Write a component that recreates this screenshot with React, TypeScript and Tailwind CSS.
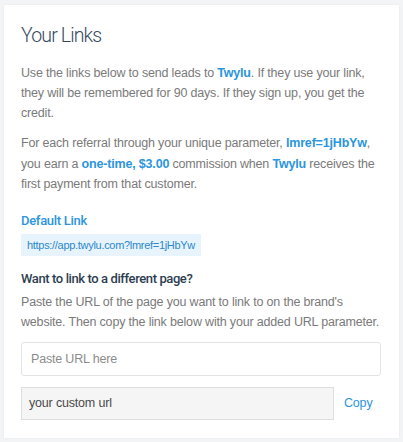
import React from "react";

export default function App() {
  return (
    <div className="w-[403px] h-[442px] bg-[#f3f4f6] pt-[5px] px-[4px] pb-[4px] font-['Liberation_Sans',Arial,sans-serif] tracking-[-0.18px]">
      <div className="bg-white h-[433px] shadow-[0_0_2px_rgba(0,0,0,0.06)] px-[17px] pt-[19px]">
        <h1 className="font-['Roboto',Arial,sans-serif] text-[19.5px] leading-[24px] text-[#34495e] font-light tracking-[-0.85px]">Your Links</h1>
        <p className="mt-[15px] text-[12.5px] leading-[20px] text-[#7a7a7a]">
          Use the links below to send leads to <span className="font-bold text-[#2b95dd]">Twylu</span>. If they use your link, they will be remembered for 90 days. If they sign up, you get the credit.
        </p>
        <p className="mt-[10px] text-[12.5px] leading-[20.5px] text-[#7a7a7a]">
          For each referral through your unique parameter, <span className="font-bold text-[#2b95dd]">lmref=1jHbYw</span>, you earn a <span className="font-bold text-[#2b95dd]">one-time, $3.00</span> commission when <span className="font-bold text-[#2b95dd]">Twylu</span> receives the first payment from that customer.
        </p>
        <div className="mt-[17px] font-['Roboto',Arial,sans-serif] text-[13px] leading-[18px] font-medium tracking-[-0.3px] text-[#2b95dd]">Default Link</div>
        <div className="mt-[4px] inline-block bg-[#e8f4fd] px-[6px] h-[22px] leading-[22px] text-[11px] tracking-[-0.3px] text-[#2b88cc]">
          https://app.twylu.com?lmref=1jHbYw
        </div>
        <div className="mt-[14px] font-['Roboto',Arial,sans-serif] text-[13px] leading-[18px] text-[#2c3e50] font-medium tracking-[-0.4px]">Want to link to a different page?</div>
        <p className="mt-[4px] text-[12.5px] leading-[20px] text-[#7a7a7a]">
          Paste the URL of the page you want to link to on the brand's website. Then copy the link below with your added URL parameter.
        </p>
        <input
          className="mt-[10px] block w-[360px] h-[34px] border border-[#e3e3e3] rounded-[3px] px-[9px] text-[12.5px] tracking-[-0.18px] text-[#555] placeholder:text-[#8c8c8c] outline-none"
          placeholder="Paste URL here"
        />
        <div className="mt-[11px] flex items-center">
          <div className="w-[313px] h-[33px] bg-[#f5f5f5] border border-[#dedede] px-[7px] flex items-center text-[12.5px] text-[#4a4a4a]">
            your custom url
          </div>
          <span className="ml-[10px] text-[12.5px] text-[#2b95dd]">Copy</span>
        </div>
      </div>
    </div>
  );
}
